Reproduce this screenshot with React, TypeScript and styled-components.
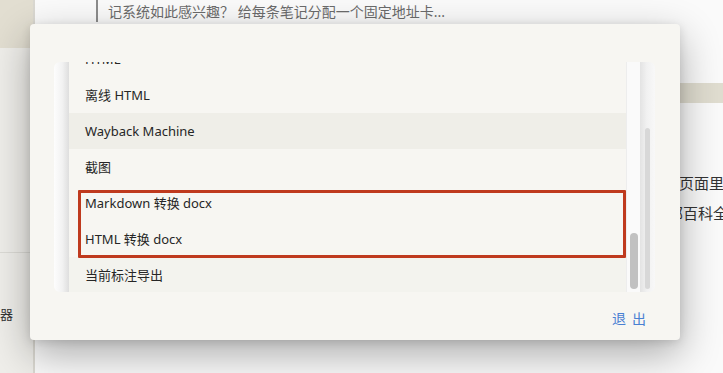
import React from "react";
import styled, { createGlobalStyle, css } from "styled-components";

const GlobalStyle = createGlobalStyle`
  html, body {
    margin: 0;
    padding: 0;
    background: #fafafa;
  }
  * {
    box-sizing: border-box;
  }
`;

const FONT = `"Noto Sans", "Noto Sans CJK SC", sans-serif`;

const items = [
  "HTML",
  "离线 HTML",
  "Wayback Machine",
  "截图",
  "Markdown 转换 docx",
  "HTML 转换 docx",
  "当前标注导出",
];

export default function App() {
  return (
    <>
      <GlobalStyle />
      <Page>
        <Sidebar>
          <SideHeader />
          <SideSpacer />
          <SideDivider />
          <SideItem>器</SideItem>
        </Sidebar>
        <Main>
          <Quote>记系统如此感兴趣？ 给每条笔记分配一个固定地址卡...</Quote>
          <HeadingBar />
          <Paragraph>
            <Line $shift={-1}>打开这个页面里</Line>
            <Line $shift={-20}>这是一部百科全书</Line>
          </Paragraph>
        </Main>

        <Modal>
          <ScrollArea>
            <LeftShade />
            <Rows>
              <RowList>
                {items.map((label, i) => (
                  <Row
                    key={label}
                    $tone={i === 2 ? "hover" : i === items.length - 1 ? "muted" : "plain"}
                  >
                    {label}
                  </Row>
                ))}
              </RowList>
              <Highlight />
            </Rows>
            <InnerTrack>
              <Thumb $top={171} $height={56} $width={8} $color="#c1c1c1" />
            </InnerTrack>
            <OuterTrack>
              <Thumb $top={66} $height={161} $width={5} $color="#d8d8d8" />
            </OuterTrack>
          </ScrollArea>
          <Footer>
            <ExitButton>退出</ExitButton>
          </Footer>
        </Modal>
      </Page>
    </>
  );
}

const Page = styled.div`
  position: relative;
  width: 723px;
  height: 373px;
  overflow: hidden;
  display: flex;
  font-family: ${FONT};
`;

const Sidebar = styled.aside`
  width: 35px;
  flex-shrink: 0;
  background: #efeeea;
  border-right: 2px solid #dad8d1;
  display: flex;
  flex-direction: column;
`;

const SideHeader = styled.div`
  height: 48px;
  background: #e2ded1;
`;

const SideSpacer = styled.div`
  height: 204px;
`;

const SideDivider = styled.div`
  height: 1px;
  background: #dcdbd6;
`;

const SideItem = styled.div`
  margin-top: 51px;
  font-size: 13px;
  line-height: 20px;
  color: #333;
  white-space: nowrap;
`;

const Main = styled.main`
  flex: 1;
  background: #fafafa;
  overflow: hidden;
  display: flex;
  flex-direction: column;
`;

const Quote = styled.div`
  margin-left: 61px;
  height: 22px;
  border-left: 2px solid #8c8c8c;
  padding-left: 10px;
  font-size: 14px;
  line-height: 24px;
  color: #6b6b6b;
  white-space: nowrap;
`;

const HeadingBar = styled.div`
  margin-top: 61px;
  height: 20px;
  background: #e0ddd0;
`;

const Paragraph = styled.div`
  margin-top: 65px;
  display: flex;
  flex-direction: column;
`;

const Line = styled.div<{ $shift: number }>`
  text-align: right;
  white-space: nowrap;
  font-family: "Noto Sans CJK SC", sans-serif;
  font-size: 15px;
  line-height: 30px;
  color: #333;
  margin-right: ${(p) => p.$shift}px;
`;

const Modal = styled.section`
  position: absolute;
  left: 30px;
  top: 24px;
  width: 650px;
  height: 316px;
  background: #f7f6f2;
  border-radius: 4px;
  box-shadow: 0 14px 40px rgba(0, 0, 0, 0.32), 0 2px 10px rgba(0, 0, 0, 0.12);
  padding: 38px 25px 0 24px;
  display: flex;
  flex-direction: column;
`;

const ScrollArea = styled.div`
  height: 230px;
  display: grid;
  grid-template-columns: 15px 1fr 14px 15px;
`;

const LeftShade = styled.div`
  border-radius: 6px 0 0 6px;
  background: linear-gradient(to right, #fdfdfd 0%, #f2f2f2 55%, #dedede 100%);
`;

const Rows = styled.div`
  position: relative;
  overflow: hidden;
`;

const RowList = styled.div`
  margin-top: -21px;
`;

const rowTones = {
  plain: css`
    background: transparent;
  `,
  hover: css`
    background: #efeee8;
  `,
  muted: css`
    background: #f3f3ee;
  `,
};

const Row = styled.div<{ $tone: keyof typeof rowTones }>`
  height: 36px;
  padding-left: 16px;
  font-size: 13px;
  line-height: 37px;
  color: #262626;
  white-space: nowrap;
  overflow: hidden;
  ${(p) => rowTones[p.$tone]}
`;

const Highlight = styled.div`
  position: absolute;
  left: 9px;
  right: 0;
  top: 128px;
  height: 68px;
  border: 3px solid #bf3a1e;
  border-radius: 1px;
  pointer-events: none;
`;

const InnerTrack = styled.div`
  background: #fafafa;
  border-left: 1px solid #ededed;
  display: flex;
  flex-direction: column;
  align-items: center;
`;

const OuterTrack = styled.div`
  border-radius: 0 6px 6px 0;
  background: linear-gradient(to right, #e3e3e3 0%, #f1f1f1 45%, #f8f8f8 100%);
  display: flex;
  flex-direction: column;
  align-items: center;
`;

const Thumb = styled.div<{ $top: number; $height: number; $width: number; $color: string }>`
  margin-top: ${(p) => p.$top}px;
  height: ${(p) => p.$height}px;
  width: ${(p) => p.$width}px;
  border-radius: ${(p) => p.$width / 2}px;
  background: ${(p) => p.$color};
`;

const Footer = styled.footer`
  flex: 1;
  display: flex;
  align-items: center;
  justify-content: flex-end;
  padding: 4px 9px 0 0;
`;

const ExitButton = styled.button`
  border: none;
  background: none;
  padding: 0;
  cursor: pointer;
  font-family: "Noto Sans CJK SC", sans-serif;
  font-size: 14px;
  line-height: 20px;
  letter-spacing: 6px;
  margin-right: -6px;
  color: #4a80d2;
`;
